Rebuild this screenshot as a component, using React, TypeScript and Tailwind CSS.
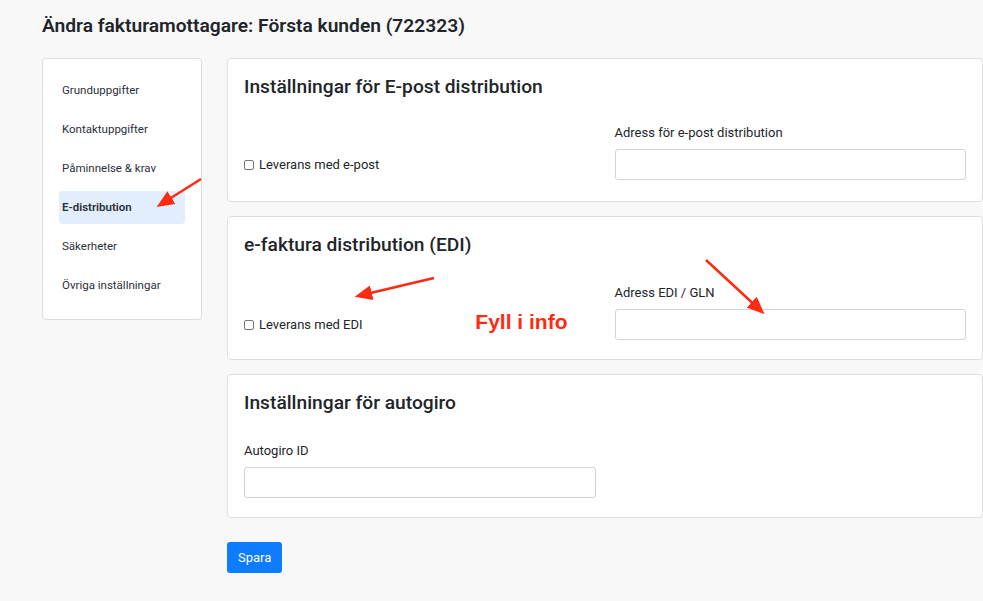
const menuItems = ["Grunduppgifter", "Kontaktuppgifter", "Påminnelse & krav", "E-distribution", "Säkerheter", "Övriga inställningar"];

function Checkbox({ label }: { label: string }) {
    return (
        <label className="flex items-center text-[13px] leading-[16px] text-[#212529]">
            <span className="w-[10px] h-[10px] border border-[#767676] rounded-[2px] bg-white mr-[5px]" />
            {label}
        </label>
    )
}

function Field({ label }: { label: string }) {
    return (
        <div className="flex flex-col">
            <div className="text-[13px] text-[#212529] mb-[8px] leading-[16px]">{label}</div>
            <input className="w-full h-[31px] border border-[#ced4da] rounded-[3px] bg-white outline-none" type="text" />
        </div>
    )
}

function Card({ title, children }: { title: string; children: React.ReactNode }) {
    return (
        <div className="bg-white border border-[#dfdfdf] rounded-[4px] pl-[16px] pr-[16px] pt-[16px] h-[144px]">
            <h2 className="text-[19.2px] font-medium text-[#212529] leading-[24px]">{title}</h2>
            {children}
        </div>
    )
}

export default function App() {
    return (
        <div className="relative w-full min-h-[601px] bg-[#f8f8f8] overflow-hidden" style={{ fontFamily: "Roboto, 'Liberation Sans', sans-serif" }}>
            <div className="pl-[42px] pt-[14px]">
                <h1 className="text-[19.2px] font-semibold text-[#212529] leading-[24px]">Ändra fakturamottagare: Första kunden (722323)</h1>
            </div>
            <div className="flex flex-row pl-[42px] pt-[20px]">
                <div className="w-[160px] h-[262px] shrink-0 bg-white border border-[#dfdfdf] rounded-[4px] px-[16px] pt-[15px]">
                    {menuItems.map((item, index) => (
                        <div key={index} className={`h-[33px] mb-[6px] flex items-center px-[3px] rounded-[4px] text-[11.5px] text-[#2b2f3a] ${item == "E-distribution" ? "bg-[#e2eefd] font-semibold text-[#1c2a4a]" : ""}`}>{item}</div>
                    ))}
                </div>
                <div className="flex-1 ml-[25px] flex flex-col">
                    <div className="flex flex-col gap-[14px]">
                        <Card title="Inställningar för E-post distribution">
                            <div className="grid grid-cols-2 gap-[19px] mt-[26px]">
                                <div className="flex items-end pb-[7px]"><Checkbox label="Leverans med e-post" /></div>
                                <Field label="Adress för e-post distribution" />
                            </div>
                        </Card>
                        <Card title="e-faktura distribution (EDI)">
                            <div className="grid grid-cols-2 gap-[19px] mt-[28px]">
                                <div className="flex items-end justify-between pb-[7px]">
                                    <Checkbox label="Leverans med EDI" />
                                    <span className="text-[21px] font-bold text-[#ff2a12] mr-[28px] -mb-[4px]" style={{ fontFamily: "'Liberation Sans', Arial, sans-serif" }}>Fyll i info</span>
                                </div>
                                <Field label="Adress EDI / GLN" />
                            </div>
                        </Card>
                        <Card title="Inställningar för autogiro">
                            <div className="grid grid-cols-2 gap-[19px] mt-[28px]">
                                <Field label="Autogiro ID" />
                            </div>
                        </Card>
                    </div>
                    <div className="mt-[24px]">
                        <button className="h-[31px] px-[11px] bg-[#0d7cff] text-white text-[13px] rounded-[3px]">Spara</button>
                    </div>
                </div>
            </div>
            <svg className="absolute inset-0 pointer-events-none" width="983" height="601">
                <defs>
                    <marker id="head" markerWidth="7" markerHeight="6" refX="4" refY="3" orient="auto" markerUnits="strokeWidth">
                        <path d="M0,0 L7,3 L0,6 Z" fill="#ff2a12" />
                    </marker>
                </defs>
                <g stroke="#ff2a12" strokeWidth="2.5" markerEnd="url(#head)">
                    <line x1="201" y1="179" x2="163" y2="203" />
                    <line x1="434" y1="278" x2="362" y2="295" />
                    <line x1="706" y1="260" x2="759" y2="309" />
                </g>
            </svg>
        </div>
    )
}
